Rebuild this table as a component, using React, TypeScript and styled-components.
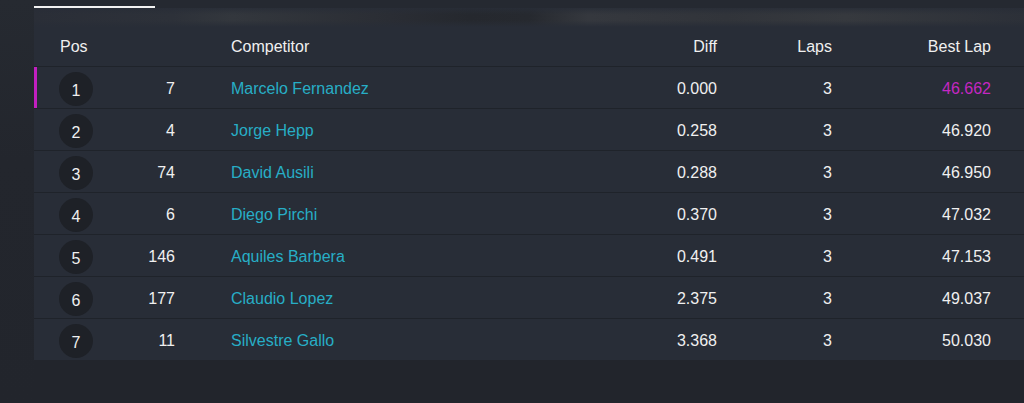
import { createGlobalStyle, styled } from 'styled-components';

const GlobalStyle = createGlobalStyle`
  html, body {
    margin: 0;
    padding: 0;
    background: #22252c;
    font-family: "Liberation Sans", Arial, sans-serif;
  }
`;

type Result = {
  pos: number;
  num: number;
  name: string;
  diff: string;
  laps: number;
  best: string;
  fastest?: boolean;
};

const results: Result[] = [
  { pos: 1, num: 7, name: 'Marcelo Fernandez', diff: '0.000', laps: 3, best: '46.662', fastest: true },
  { pos: 2, num: 4, name: 'Jorge Hepp', diff: '0.258', laps: 3, best: '46.920' },
  { pos: 3, num: 74, name: 'David Ausili', diff: '0.288', laps: 3, best: '46.950' },
  { pos: 4, num: 6, name: 'Diego Pirchi', diff: '0.370', laps: 3, best: '47.032' },
  { pos: 5, num: 146, name: 'Aquiles Barbera', diff: '0.491', laps: 3, best: '47.153' },
  { pos: 6, num: 177, name: 'Claudio Lopez', diff: '2.375', laps: 3, best: '49.037' },
  { pos: 7, num: 11, name: 'Silvestre Gallo', diff: '3.368', laps: 3, best: '50.030' },
];

const App = () => {
  return (
    <>
      <GlobalStyle />
      <Page>
        <Side />
        <Main>
          <TabBar>
            <ActiveTab />
          </TabBar>
          <Banner />
          <Table>
            <HeaderRow>
              <HeadCell>Pos</HeadCell>
              <HeadCell $align="right"></HeadCell>
              <HeadCell $indent>Competitor</HeadCell>
              <HeadCell $align="right">Diff</HeadCell>
              <HeadCell $align="right">Laps</HeadCell>
              <HeadCell $align="right">Best Lap</HeadCell>
            </HeaderRow>
            {results.map((r) => (
              <Row key={r.pos} $highlight={r.fastest}>
                <Cell>
                  <PosBadge>{r.pos}</PosBadge>
                </Cell>
                <Cell $align="right">{r.num}</Cell>
                <NameCell>{r.name}</NameCell>
                <Cell $align="right">{r.diff}</Cell>
                <Cell $align="right">{r.laps}</Cell>
                <Cell $align="right" $fastest={r.fastest}>
                  {r.best}
                </Cell>
              </Row>
            ))}
          </Table>
        </Main>
      </Page>
    </>
  );
};

const Page = styled.div`
  display: flex;
  width: 1024px;
  height: 403px;
  background: #22252c;
  overflow: hidden;
`;

const Side = styled.div`
  width: 34px;
  flex-shrink: 0;
  background: linear-gradient(180deg, #262a31 0%, #23262d 40%, #22252c 100%);
`;

const Main = styled.div`
  display: flex;
  flex-direction: column;
  flex: 1;
`;

const TabBar = styled.div`
  display: flex;
  align-items: flex-end;
  height: 8px;
  background: #252931;
`;

const ActiveTab = styled.div`
  width: 121px;
  height: 2px;
  background: #f2f2f2;
`;

const Banner = styled.div`
  height: 19px;
  background:
    linear-gradient(180deg, rgba(40, 45, 55, 0.85) 0%, rgba(40, 45, 55, 0) 35%, rgba(40, 45, 55, 0) 65%, rgba(40, 45, 55, 1) 100%),
    linear-gradient(90deg, #2a2e37 0%, #2d3139 14%, #33373d 20%, #2a2d34 36%, #25282e 44%, #26292f 50%, #35383e 56%, #31343a 70%, #36393e 82%, #2c3038 100%);
`;

const Table = styled.div`
  display: flex;
  flex-direction: column;
  background: #282d37;
`;

const gridCols = `
  display: grid;
  grid-template-columns: 60px 56px 1fr 120px 115px 159px;
  align-items: center;
  padding: 0 33px 0 25px;
`;

const HeaderRow = styled.div`
  ${gridCols}
  height: 39px;
  border-bottom: 1px solid #1f232a;
`;

const HeadCell = styled.div<{ $align?: 'right'; $indent?: boolean }>`
  color: #f0f0f0;
  font-size: 16px;
  text-align: ${(p) => p.$align ?? 'left'};
  padding-left: ${(p) => (p.$indent ? '56px' : '1px')};
`;

const Row = styled.div<{ $highlight?: boolean }>`
  ${gridCols}
  height: 41px;
  border-bottom: 1px solid #1f232a;
  box-shadow: ${(p) => (p.$highlight ? 'inset 3px 0 0 #c21fc0' : 'none')};

  &:last-child {
    border-bottom: none;
  }
`;

const Cell = styled.div<{ $align?: 'right'; $fastest?: boolean }>`
  color: ${(p) => (p.$fastest ? '#c427c2' : '#f0f0f0')};
  font-size: 16px;
  text-align: ${(p) => p.$align ?? 'left'};
  padding-top: 2px;
`;

const NameCell = styled.div`
  color: #27aec6;
  font-size: 16px;
  padding-left: 56px;
  padding-top: 2px;
`;

const PosBadge = styled.div`
  display: flex;
  align-items: center;
  justify-content: center;
  width: 34px;
  height: 34px;
  padding-top: 4px;
  box-sizing: border-box;
  border-radius: 50%;
  background: #1e2127;
  color: #f0f0f0;
  font-size: 16px;
`;

export default App;
